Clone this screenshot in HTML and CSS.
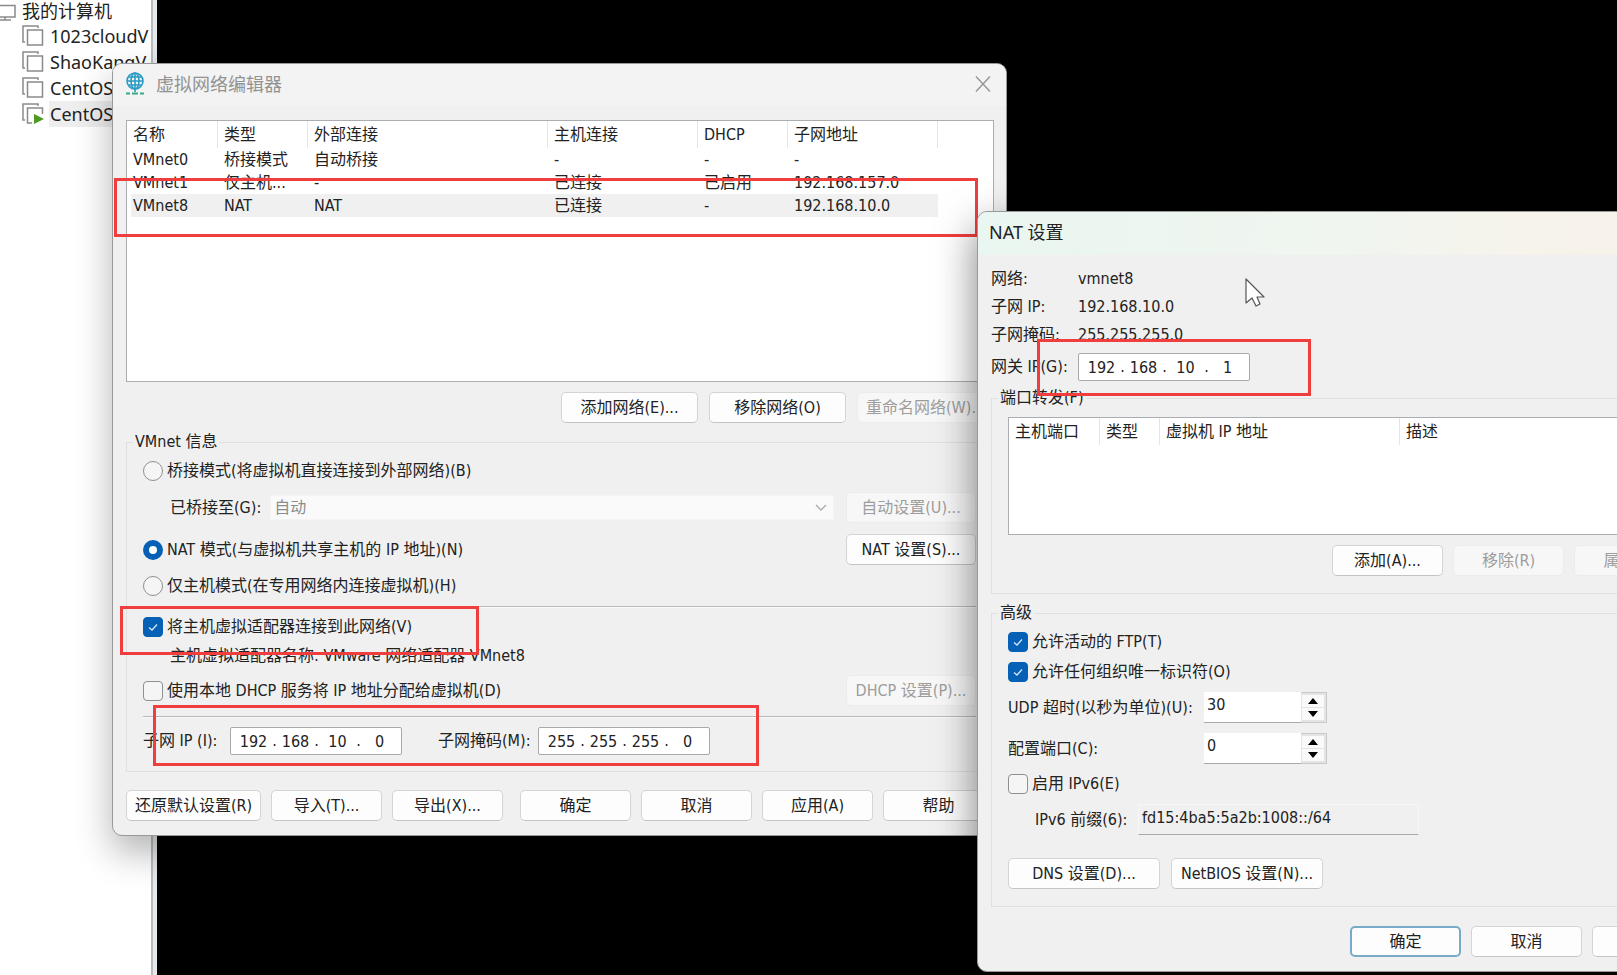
FILE: index.html
```html
<!DOCTYPE html>
<html lang="zh-CN">
<head>
  <meta charset="UTF-8" />
  <meta name="viewport" content="width=device-width, initial-scale=1" />
  <title>虚拟网络编辑器</title>
  <link rel="stylesheet" href="styles.css">
</head>
<body>
  <!-- VM library -->
  <aside class="sidebar">
    <ul class="tree">
      <li class="tree-root">
        <svg class="root-icon" viewBox="0 0 18 20" width="18" height="20"><path d="M-2 3.500H15V15H-2M5 15V18M0 18H11" fill="none" stroke="#8a8a8a" stroke-width="1.500"/></svg>
        <span class="tree-text">我的计算机</span>
      </li>
      <li class="tree-item">
        <svg class="vm-icon" viewBox="0 0 22 22" width="22" height="22"><path d="M3 17H1V1H16V3M5.500 5H20.500V20H5.500Z" fill="none" stroke="#8a8a8a" stroke-width="1.500"/></svg>
        <span class="tree-text">1023cloudV</span>
      </li>
      <li class="tree-item">
        <svg class="vm-icon" viewBox="0 0 22 22" width="22" height="22"><path d="M3 17H1V1H16V3M5.500 5H20.500V20H5.500Z" fill="none" stroke="#8a8a8a" stroke-width="1.500"/></svg>
        <span class="tree-text">ShaoKangV</span>
      </li>
      <li class="tree-item">
        <svg class="vm-icon" viewBox="0 0 22 22" width="22" height="22"><path d="M3 17H1V1H16V3M5.500 5H20.500V20H5.500Z" fill="none" stroke="#8a8a8a" stroke-width="1.500"/></svg>
        <span class="tree-text">CentOS</span>
      </li>
      <li class="tree-item">
        <svg class="vm-icon" viewBox="0 0 22 22" width="22" height="22"><path d="M3 17H1V1H16V3M10 20H5.500V5H20.500V11" fill="none" stroke="#8a8a8a" stroke-width="1.500"/><path d="M12 11L22 16L12 21Z" fill="#4c9a1f"/></svg>
        <span class="tree-text selected">CentOS</span>
      </li>
    </ul>
  </aside>

  <!-- Virtual network editor -->
  <section class="window editor-window">
    <header class="title-bar">
      <svg viewBox="0 0 20 24" width="20" height="24"><g fill="none" stroke="#2b9bc4" stroke-width="1.600"><circle cx="10" cy="9" r="8"/><ellipse cx="10" cy="9" rx="4" ry="8"/><path d="M10 1V20M2 9H18M3.500 5H16.500M3.500 13H16.500"/></g><path d="M1 21.500H5M7 21.500H13M15 21.500H19" stroke="#35a98c" stroke-width="1.800"/></svg>
      <h1 class="title muted">虚拟网络编辑器</h1>
      <button class="close-btn" type="button" aria-label="关闭">
        <svg viewBox="0 0 16 18" width="16" height="18"><path d="M1 1.500L15 16.500M15 1.500L1 16.500" fill="none" stroke="#979797" stroke-width="1.500"/></svg>
      </button>
    </header>

    <div class="window-body">
      <div class="list-box network-list">
        <table>
          <colgroup><col class="col-first"><col class="col-90"><col class="col-240"><col class="col-150"><col class="col-90"><col class="col-150"></colgroup>
          <thead>
            <tr><th>名称</th><th>类型</th><th>外部连接</th><th>主机连接</th><th>DHCP</th><th>子网地址</th></tr>
          </thead>
          <tbody>
            <tr><td>VMnet0</td><td>桥接模式</td><td>自动桥接</td><td>-</td><td>-</td><td>-</td></tr>
            <tr><td>VMnet1</td><td>仅主机...</td><td>-</td><td>已连接</td><td>已启用</td><td>192.168.157.0</td></tr>
            <tr class="selected"><td>VMnet8</td><td>NAT</td><td>NAT</td><td>已连接</td><td>-</td><td>192.168.10.0</td></tr>
          </tbody>
        </table>
      </div>

      <div class="list-actions">
        <button class="btn btn-wide" type="button">添加网络(E)...</button>
        <button class="btn btn-wide" type="button">移除网络(O)</button>
        <button class="btn btn-wide" type="button" disabled>重命名网络(W)...</button>
      </div>

      <fieldset class="vmnet-info">
        <legend>VMnet 信息</legend>
        <div class="mode-group">
          <label class="option"><input type="radio" name="mode">桥接模式(将虚拟机直接连接到外部网络)(B)</label>
          <div class="row indent">
            <label for="bridge">已桥接至(G):</label>
            <select id="bridge" class="bridge-select" disabled><option>自动</option></select>
            <button class="btn btn-setting" type="button" disabled>自动设置(U)...</button>
          </div>
          <div class="row">
            <label class="option"><input type="radio" name="mode" checked>NAT 模式(与虚拟机共享主机的 IP 地址)(N)</label>
            <button class="btn btn-setting" type="button">NAT 设置(S)...</button>
          </div>
          <label class="option"><input type="radio" name="mode">仅主机模式(在专用网络内连接虚拟机)(H)</label>
        </div>
        <hr>
        <div class="host-group">
          <label class="option"><input type="checkbox" checked>将主机虚拟适配器连接到此网络(V)</label>
          <p class="indent">主机虚拟适配器名称: VMware 网络适配器 VMnet8</p>
          <div class="row">
            <label class="option"><input type="checkbox">使用本地 DHCP 服务将 IP 地址分配给虚拟机(D)</label>
            <button class="btn btn-setting" type="button" disabled>DHCP 设置(P)...</button>
          </div>
        </div>
        <hr>
        <div class="subnet-row">
          <label class="subnet-label" for="subnet-ip">子网 IP (I):</label>
          <div class="ip-box">
            <input id="subnet-ip" type="text" value="192"><span>.</span><input type="text" aria-label="子网 IP 2" value="168"><span>.</span><input type="text" aria-label="子网 IP 3" value="10"><span>.</span><input type="text" aria-label="子网 IP 4" value="0">
          </div>
          <label class="mask-label" for="subnet-mask">子网掩码(M):</label>
          <div class="ip-box">
            <input id="subnet-mask" type="text" value="255"><span>.</span><input type="text" aria-label="子网掩码 2" value="255"><span>.</span><input type="text" aria-label="子网掩码 3" value="255"><span>.</span><input type="text" aria-label="子网掩码 4" value="0">
          </div>
        </div>
      </fieldset>

      <footer class="editor-footer">
        <button class="btn btn-restore" type="button">还原默认设置(R)</button>
        <button class="btn" type="button">导入(T)...</button>
        <button class="btn" type="button">导出(X)...</button>
        <button class="btn push-right" type="button">确定</button>
        <button class="btn" type="button">取消</button>
        <button class="btn" type="button">应用(A)</button>
        <button class="btn" type="button">帮助</button>
      </footer>
    </div>
  </section>

  <div class="mark mark-vmnet8"></div>
  <div class="mark mark-adapter"></div>
  <div class="mark mark-subnet"></div>

  <!-- NAT settings -->
  <section class="window nat-window">
    <header class="title-bar">
      <h2 class="title">NAT 设置</h2>
    </header>

    <div class="window-body">
      <div class="nat-info">
        <span>网络:</span><span>vmnet8</span>
        <span>子网 IP:</span><span>192.168.10.0</span>
        <span>子网掩码:</span><span>255.255.255.0</span>
        <label for="gateway">网关 IP(G):</label>
        <div class="ip-box">
          <input id="gateway" type="text" value="192"><span>.</span><input type="text" aria-label="网关 IP 2" value="168"><span>.</span><input type="text" aria-label="网关 IP 3" value="10"><span>.</span><input type="text" aria-label="网关 IP 4" value="1">
        </div>
      </div>

      <fieldset class="port-forward">
        <legend>端口转发(F)</legend>
        <div class="list-box port-list">
          <table>
            <colgroup><col class="col-first"><col class="col-60"><col class="col-240"><col></colgroup>
            <thead>
              <tr><th>主机端口</th><th>类型</th><th>虚拟机 IP 地址</th><th>描述</th></tr>
            </thead>
          </table>
        </div>
        <div class="list-actions">
          <button class="btn" type="button">添加(A)...</button>
          <button class="btn" type="button" disabled>移除(R)</button>
          <button class="btn" type="button" disabled>属性(P)</button>
        </div>
      </fieldset>

      <fieldset class="advanced">
        <legend>高级</legend>
        <div class="advanced-group">
          <label class="option"><input type="checkbox" checked>允许活动的 FTP(T)</label>
          <label class="option"><input type="checkbox" checked>允许任何组织唯一标识符(O)</label>
          <div class="field-row">
            <label for="udp">UDP 超时(以秒为单位)(U):</label>
            <div class="spin-box">
              <input id="udp" type="text" value="30">
              <div class="spin-btns">
                <button type="button" aria-label="增加"><svg viewBox="0 0 10 6" width="10" height="6"><path d="M0 6L5 0L10 6Z"/></svg></button>
                <button type="button" aria-label="减少"><svg viewBox="0 0 10 6" width="10" height="6"><path d="M0 0H10L5 6Z"/></svg></button>
              </div>
            </div>
          </div>
          <div class="field-row">
            <label for="port">配置端口(C):</label>
            <div class="spin-box">
              <input id="port" type="text" value="0">
              <div class="spin-btns">
                <button type="button" aria-label="增加"><svg viewBox="0 0 10 6" width="10" height="6"><path d="M0 6L5 0L10 6Z"/></svg></button>
                <button type="button" aria-label="减少"><svg viewBox="0 0 10 6" width="10" height="6"><path d="M0 0H10L5 6Z"/></svg></button>
              </div>
            </div>
          </div>
          <label class="option"><input type="checkbox">启用 IPv6(E)</label>
          <div class="row indent">
            <label class="prefix-label" for="prefix">IPv6 前缀(6):</label>
            <input id="prefix" class="prefix-input" type="text" value="fd15:4ba5:5a2b:1008::/64" readonly>
          </div>
          <div class="advanced-actions">
            <button class="btn btn-dns" type="button">DNS 设置(D)...</button>
            <button class="btn btn-dns" type="button">NetBIOS 设置(N)...</button>
          </div>
        </div>
      </fieldset>

      <footer class="nat-footer">
        <button class="btn btn-default" type="button">确定</button>
        <button class="btn" type="button">取消</button>
        <button class="btn" type="button">帮助</button>
      </footer>
    </div>
  </section>

  <div class="mark mark-gateway"></div>
  <svg class="cursor" viewBox="0 0 20 30" width="20" height="30"><path d="M1 1V25L7 20L11 28L15 26L12 19H19Z" fill="#fff" stroke="#555" stroke-width="1.200" stroke-linejoin="round"/></svg>
</body>
</html>
```
FILE: styles.css
```css
* {
  box-sizing: border-box;
  margin: 0;
  padding: 0;
}

html, body {
  height: 100%;
}

body {
  position: relative;
  overflow: hidden;
  background-color: #000;
  color: #222;
  font-family: "DejaVu Sans Condensed", "Noto Sans CJK SC", sans-serif;
  font-size: 16px;
  line-height: 20px;
}

button, input, select {
  font: inherit;
  color: inherit;
}

/* Sidebar */
.sidebar {
  width: 157px;
  height: 100%;
  padding-right: 4px;
  background-color: #e6e9eb;
}

.tree {
  height: 100%;
  padding-right: 1px;
  border-right: 2px solid #b9bdc0;
  background-color: #fff;
  list-style: none;
  font-family: "Noto Sans", "Noto Sans CJK SC", sans-serif;
  font-size: 18px;
  line-height: 26px;
}

.tree-root,
.tree-item {
  display: flex;
  align-items: center;
  height: 26px;
  overflow: hidden;
}

.tree-root {
  height: 23px;
  gap: 3px;
  line-height: 22px;
}

.tree-root .tree-text {
  padding-bottom: 2px;
}

.tree-item {
  padding-left: 22px;
  gap: 5px;
}

.tree-text {
  flex: 1;
  padding-left: 1px;
  white-space: nowrap;
}

.root-icon,
.vm-icon {
  flex: none;
}

.tree-text.selected {
  background-color: #eee;
}

/* Windows */
.window {
  position: absolute;
  border: 1px solid #999;
  border-radius: 10px;
  background-color: #f0f0f0;
  overflow: hidden;
}

.editor-window {
  left: 112px;
  top: 63px;
  width: 895px;
  box-shadow: 0 16px 36px rgba(0, 0, 0, 0.3);
}

.nat-window {
  left: 977px;
  top: 211px;
  width: 739px;
  box-shadow: 0 16px 40px rgba(0, 0, 0, 0.5);
}

.title-bar {
  display: flex;
  align-items: center;
  height: 42px;
  padding: 0 15px 3px 12px;
  gap: 11px;
  background-color: #f3f3f3;
}

.nat-window .title-bar {
  height: 43px;
  padding-left: 11px;
  background: linear-gradient(100deg, #eaf6f1 0%, #f0f5ef 50%, #f6f3eb 75%, #f8f1e8 100%);
}

.title {
  font-family: "Noto Sans", "Noto Sans CJK SC", sans-serif;
  font-size: 18px;
  font-weight: normal;
  line-height: 24px;
}

.muted {
  color: #929292;
}

.close-btn {
  display: flex;
  margin-left: auto;
  border: none;
  background: transparent;
}

.window-body {
  padding: 14px 12px 14px 13px;
}

/* Lists */
.list-box {
  border: 1px solid #abadb0;
  background-color: #fff;
  overflow: hidden;
}

.network-list {
  height: 262px;
}

.port-list {
  height: 118px;
}

.list-box table {
  width: 811px;
  margin-left: 4px;
  border-collapse: separate;
  border-spacing: 0;
  table-layout: fixed;
}

.network-list table {
  width: 807px;
}

.list-box th,
.list-box td {
  height: 23px;
  padding-left: 6px;
  font-weight: normal;
  text-align: left;
  white-space: nowrap;
}

.list-box th {
  height: 27px;
  padding-top: 1px;
  border-right: 1px solid #e5e5e5;
}

.list-box th:first-child,
.list-box td:first-child {
  padding-left: 2px;
}

.list-box tr.selected {
  background-color: #f0f0f0;
}

.col-first { width: 87px; }
.col-60 { width: 60px; }
.col-90 { width: 90px; }
.col-150 { width: 150px; }
.col-240 { width: 240px; }

/* Buttons */
.btn {
  flex: none;
  width: 111px;
  height: 31px;
  border: 1px solid #d4d4d4;
  border-bottom-color: #c4c4c4;
  border-radius: 5px;
  background-color: #fdfdfd;
  text-align: center;
  white-space: nowrap;
}

.btn:disabled {
  border-color: #ececec;
  background-color: #f7f7f7;
  color: #9d9d9d;
}

.btn-wide { width: 137px; }
.btn-restore { width: 135px; }
.btn-dns { width: 152px; }

.btn-setting {
  width: 130px;
  margin-left: auto;
}

.btn-default {
  border: 2px solid #78abc8;
}

.list-actions {
  display: flex;
  justify-content: flex-end;
  gap: 11px;
  margin-top: 10px;
}

.port-forward .list-actions {
  gap: 10px;
}

/* Groups */
fieldset {
  min-width: 0;
  margin-top: 9px;
  padding: 9px 17px 17px 16px;
  border: 1px solid #e0e0e0;
}

legend {
  margin-left: -10px;
  padding: 0 2px;
}

.vmnet-info {
  padding-bottom: 16px;
}

.mode-group,
.host-group,
.advanced-group {
  display: flex;
  flex-direction: column;
}

.mode-group { gap: 11px; }
.host-group { gap: 9px; }
.advanced-group { gap: 10px; }

.row {
  display: flex;
  align-items: center;
}

.indent {
  padding-left: 27px;
}

hr {
  margin: 10px 0 9px;
  border: none;
  border-top: 1px solid #b9b9b9;
  border-bottom: 1px solid #fafafa;
}

.option {
  display: flex;
  align-items: center;
  gap: 4px;
  height: 20px;
}

input[type="radio"],
input[type="checkbox"] {
  flex: none;
  appearance: none;
  width: 20px;
  height: 20px;
  border: 1px solid #8f8f8f;
  border-radius: 4px;
  background-color: #f5f5f5;
}

input[type="radio"] {
  border-radius: 50%;
}

input[type="radio"]:checked {
  border: 6px solid #0560b6;
  background-color: #fff;
}

input[type="checkbox"]:checked {
  border-color: #0560b6;
  background: #0560b6 url("data:image/svg+xml,%3Csvg xmlns='http://www.w3.org/2000/svg' viewBox='0 0 18 18'%3E%3Cpath d='M5 9.500L8 12L13 6.500' fill='none' stroke='%23d5e6f5' stroke-width='1.300'/%3E%3C/svg%3E") no-repeat center;
}

.bridge-select {
  flex: 1;
  appearance: none;
  height: 25px;
  margin: 0 12px 0 9px;
  padding-left: 3px;
  border: 1px solid #f4f4f4;
  background: #fafafa url("data:image/svg+xml,%3Csvg xmlns='http://www.w3.org/2000/svg' width='12' height='8'%3E%3Cpath d='M1 1L6 6L11 1' fill='none' stroke='%23aaa' stroke-width='1.300'/%3E%3C/svg%3E") no-repeat right 6px center;
  color: #8c8c8c;
  opacity: 1;
}

.bridge-select + .btn-setting {
  margin-left: 0;
}

.subnet-row {
  display: flex;
  align-items: center;
}

.subnet-label {
  width: 87px;
}

.mask-label {
  width: 100px;
  margin-left: 36px;
}

.ip-box {
  display: flex;
  align-items: center;
  width: 172px;
  height: 28px;
  padding: 0 4px 0 5px;
  border: 1px solid #a9a9a9;
  border-radius: 2px;
  background-color: #fff;
}

.ip-box input {
  width: 35px;
  height: 24px;
  border: none;
  background: transparent;
  text-align: center;
}

.ip-box span {
  width: 7px;
  text-align: center;
}

.editor-footer,
.nat-footer {
  display: flex;
  gap: 10px;
}

.editor-footer {
  margin-top: 18px;
}

.push-right {
  margin-left: auto;
}

/* NAT settings */
.nat-info {
  display: grid;
  grid-template-columns: 87px 1fr;
  align-items: center;
  row-gap: 8px;
}

.port-forward {
  margin-top: 7px;
}

.field-row {
  display: grid;
  grid-template-columns: 196px 123px;
  align-items: center;
}

.spin-box {
  display: flex;
  height: 31px;
}

.spin-box input {
  width: 97px;
  padding: 0 0 4px 3px;
  border: none;
  border-bottom: 1px solid #a9a9a9;
  background-color: #fff;
}

.spin-btns {
  display: flex;
  flex: 1;
  flex-direction: column;
  gap: 1px;
  padding: 2px 2px 2px 1px;
  border: 1px solid #c9c9c9;
  border-left: none;
  background-color: #e4e4e4;
}

.spin-btns button {
  display: flex;
  flex: 1;
  align-items: center;
  justify-content: center;
  border: none;
  background-color: #fafafa;
}

.prefix-label {
  width: 103px;
}

.prefix-input {
  width: 281px;
  height: 31px;
  padding: 0 0 4px 3px;
  border: 1px solid #f6f6f6;
  border-bottom-color: #a9a9a9;
  background-color: #f0f0f0;
}

.advanced-actions {
  display: flex;
  gap: 11px;
  margin-top: 13px;
}

.nat-footer {
  justify-content: flex-end;
  margin-top: 19px;
}

/* Red highlight boxes */
.mark {
  position: absolute;
  border: 3px solid #f03e3e;
}

.mark-vmnet8 {
  left: 114px;
  top: 178px;
  width: 864px;
  height: 59px;
}

.mark-adapter {
  left: 120px;
  top: 606px;
  width: 359px;
  height: 49px;
}

.mark-subnet {
  left: 153px;
  top: 705px;
  width: 606px;
  height: 61px;
}

.mark-gateway {
  left: 1037px;
  top: 339px;
  width: 274px;
  height: 57px;
}

.cursor {
  position: absolute;
  left: 1245px;
  top: 278px;
}
```
